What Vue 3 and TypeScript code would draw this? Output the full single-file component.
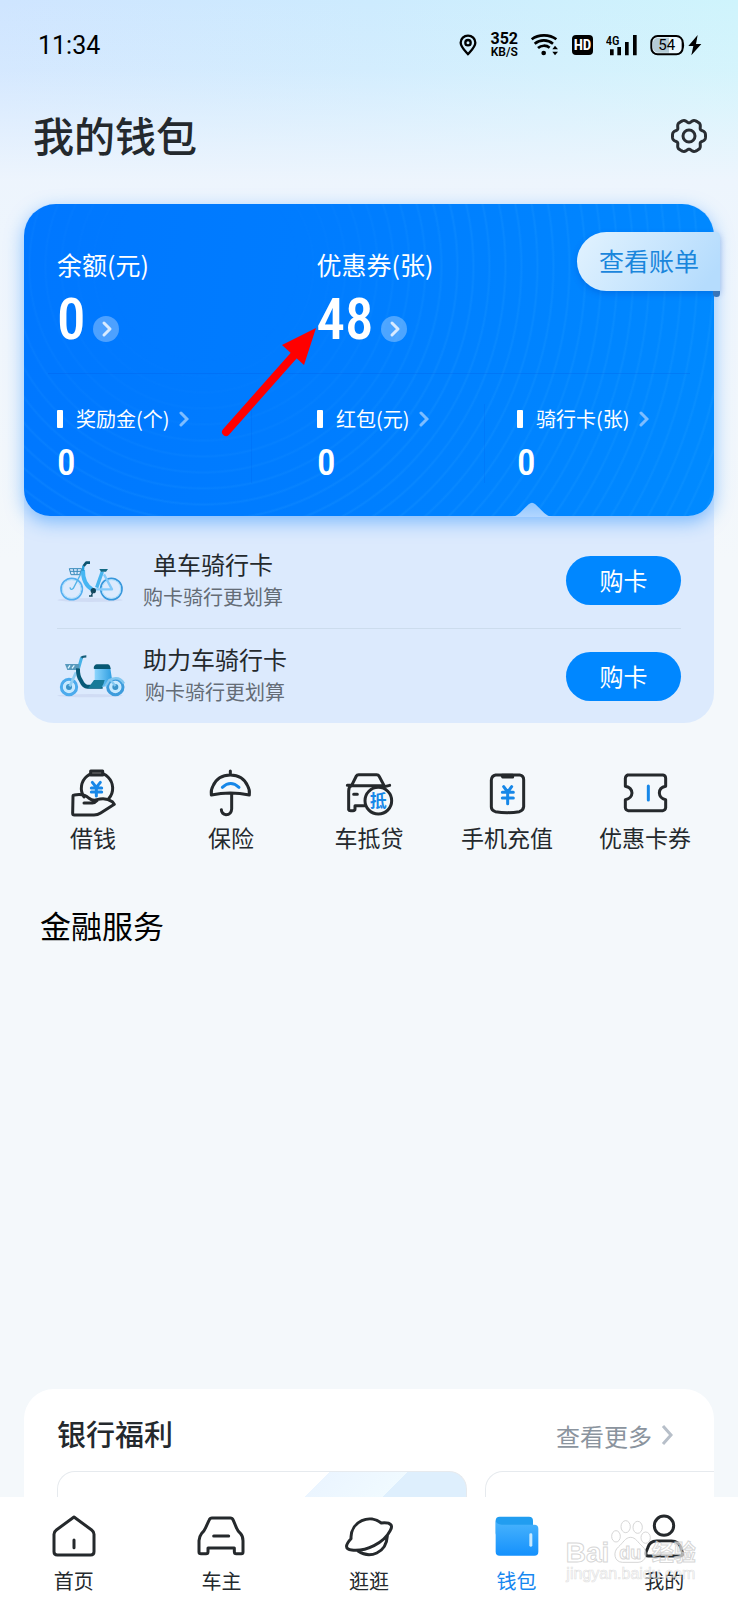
<script setup lang="ts">
interface Asset {
  label: string
  value: string
}
interface RideCard {
  id: 'bike' | 'scooter'
  title: string
  note: string
}
interface Entry {
  id: string
  label: string
}

const mainAssets: Asset[] = [
  { label: '余额(元)', value: '0' },
  { label: '优惠券(张)', value: '48' },
]
const subAssets: Asset[] = [
  { label: '奖励金(个)', value: '0' },
  { label: '红包(元)', value: '0' },
  { label: '骑行卡(张)', value: '0' },
]
const rideCards: RideCard[] = [
  { id: 'bike', title: '单车骑行卡', note: '购卡骑行更划算' },
  { id: 'scooter', title: '助力车骑行卡', note: '购卡骑行更划算' },
]
const services: Entry[] = [
  { id: 'loan', label: '借钱' },
  { id: 'insurance', label: '保险' },
  { id: 'car', label: '车抵贷' },
  { id: 'phone', label: '手机充值' },
  { id: 'coupon', label: '优惠卡券' },
]
const tabs: Entry[] = [
  { id: 'home', label: '首页' },
  { id: 'owner', label: '车主' },
  { id: 'explore', label: '逛逛' },
  { id: 'wallet', label: '钱包' },
  { id: 'me', label: '我的' },
]
const activeTab = 'wallet'

// Six-lobed outline of the settings gear
const gearPoints = Array.from({ length: 120 }, (_, i) => {
  const a = (i / 120) * Math.PI * 2
  const wave = Math.cos(6 * a)
  const r = 46 + 5 * wave - 1.5 * Math.cos(12 * a)
  return `${(60 + r * Math.cos(a)).toFixed(1)},${(60 + r * Math.sin(a)).toFixed(1)}`
}).join(' ')
</script>

<template>
  <div class="page">
    <header>
      <div class="status">
        <span class="time">11:34</span>
        <div class="indicators">
          <svg width="18" height="22" viewBox="276 102 54 66" fill="none" stroke="#000" stroke-width="7">
            <path d="M303 163C290 148 281 139 281 128a22 21 0 0 1 44 0c0 11-9 20-22 35z" stroke-linejoin="round" />
            <circle cx="303" cy="128" r="8" />
          </svg>
          <span class="speed"><b>352</b><small>KB/S</small></span>
          <svg width="28" height="22" viewBox="501 102 84 66" fill="none" stroke="#000" stroke-width="8">
            <path d="M503 118C523 102 557 102 577 118M512 131C528 118 551 118 567 131M522 144C532 135 547 135 557 143" />
            <circle cx="539" cy="159" r="7" fill="#000" stroke="none" />
            <path d="M565 148l8-11 9 11zM565 155l8 11 9-11z" fill="#000" stroke="none" />
          </svg>
          <span class="hd">HD</span>
          <svg width="31" height="22" viewBox="713 102 93 66">
            <text x="712" y="136" font-size="38" font-family="Roboto Condensed, Roboto, sans-serif" font-weight="500">4G</text>
            <path d="M725 148h11v18h-11zM747 141h11v25h-11zM770 126h11v40h-11zM794 105h11v61h-11z" />
          </svg>
          <svg width="52" height="22" viewBox="842 102 156 66">
            <rect x="846" y="108" width="94" height="55" rx="19" fill="#eaf8ff" stroke="#000" stroke-width="6" />
            <path d="M866 113h33v45h-33c-22 0-22-45 0-45z" fill="#b4cbd5" />
            <path d="M941 125q7 10 0 21z" />
            <text x="867" y="151" font-size="45" font-family="Roboto, sans-serif">54</text>
            <path d="M985 105l-28 33h15l-6 28 30-34h-16z" />
          </svg>
        </div>
      </div>
      <div class="title-row">
        <h1>我的钱包</h1>
        <button class="gear" aria-label="设置">
          <svg width="40" height="40" viewBox="0 0 120 120" fill="none" stroke="#292e33" stroke-width="9">
            <polygon :points="gearPoints" stroke-linejoin="round" />
            <circle cx="60" cy="60" r="18" />
          </svg>
        </button>
      </div>
    </header>

    <main>
      <section class="wallet">
        <div class="card">
          <div class="main-assets">
            <div v-for="a in mainAssets" :key="a.label" class="asset">
              <span class="label">{{ a.label }}</span>
              <div class="amount">
                <span class="big">{{ a.value }}</span>
                <button class="go" :aria-label="a.label">
                  <svg width="26" height="26" viewBox="0 0 26 26" fill="none" stroke="#d9ebff" stroke-width="3">
                    <path d="M11 7l6 6-6 6" stroke-linecap="round" stroke-linejoin="round" />
                  </svg>
                </button>
              </div>
            </div>
          </div>
          <div class="sub-assets">
            <div v-for="a in subAssets" :key="a.label" class="sub">
              <a href="#" class="sub-label">
                <i class="bar"></i>{{ a.label }}
                <svg width="10" height="16" viewBox="0 0 10 16" fill="none" stroke="#7dbdff" stroke-width="3">
                  <path d="M2 2l6 6-6 6" stroke-linecap="round" />
                </svg>
              </a>
              <span class="small">{{ a.value }}</span>
            </div>
          </div>
          <button class="bill">查看账单</button>
          <i class="fold"></i>
          <svg class="notch" width="48" height="15" viewBox="0 0 144 45">
            <defs>
              <linearGradient id="notchFill" x1="0" y1="0" x2="0" y2="1">
                <stop offset="0" stop-color="#8fc6ff" />
                <stop offset="1" stop-color="#b2d6ff" />
              </linearGradient>
            </defs>
            <path d="M0 45C22 45 30 38 42 26L62 7Q72-3 82 7L102 26C114 38 122 45 144 45z" fill="url(#notchFill)" />
          </svg>
          <svg class="pointer" width="96" height="112" viewBox="0 0 96 112" fill="#f00">
            <path d="M5 104L75 25" stroke="#f00" stroke-width="8" stroke-linecap="round" />
            <path d="M95 0L61 17L83 37z" />
          </svg>
        </div>

        <ul class="rides">
          <li v-for="r in rideCards" :key="r.id">
            <svg v-if="r.id === 'bike'" width="68" height="46" viewBox="21 39 204 138" fill="none">
              <ellipse cx="120" cy="165" rx="98" ry="6" fill="#d0dcf4" />
              <g stroke-width="5">
                <circle cx="65" cy="132" r="32" stroke="#54aef0" />
                <circle cx="184" cy="132" r="32" stroke="#3797dc" />
              </g>
              <circle cx="65" cy="132" r="28" stroke="#a9defc" stroke-width="3" />
              <circle cx="184" cy="132" r="28" stroke="#a9defc" stroke-width="3" />
              <path d="M96 80L70 130q-8 8-10-3" stroke="#53b4e8" stroke-width="4" />
              <path d="M130 133H186L162 88" stroke="#83cafa" stroke-width="7" stroke-linejoin="round" />
              <path d="M99 75Q98 118 128 134" stroke="#45b6f3" stroke-width="12" />
              <path d="M157 80L140 128" stroke="#47b5ee" stroke-width="10" />
              <path d="M99 78L100 62" stroke="#27a0db" stroke-width="7" />
              <path d="M101 63L109 53H120" stroke="#0d536f" stroke-width="8" stroke-linejoin="round" />
              <path d="M148 72H174L168 80H153z" fill="#126984" />
              <path d="M58 71H95L89 89H63zM70 72L73 88M82 72L81 88M60 79H92" stroke="#378abb" stroke-width="3" />
              <circle cx="130" cy="137" r="8" fill="#12465b" />
              <path d="M129 139L124 153M117 153H128" stroke="#174d63" stroke-width="4" />
            </svg>
            <svg v-else width="68" height="46" viewBox="21 324 204 138" fill="none">
              <defs>
                <linearGradient id="bodyFill">
                  <stop offset="0" stop-color="#94daff" />
                  <stop offset="1" stop-color="#2f9ee1" />
                </linearGradient>
              </defs>
              <ellipse cx="120" cy="452" rx="98" ry="5" fill="#d0dcf4" />
              <g stroke-width="9">
                <circle cx="57" cy="426" r="23" stroke="#4babed" />
                <circle cx="196" cy="426" r="23" stroke="#3d9cdc" />
              </g>
              <circle cx="57" cy="426" r="17" fill="#c4e9ff" />
              <circle cx="196" cy="426" r="17" fill="#c4e9ff" />
              <circle cx="57" cy="426" r="9" fill="#3a93c9" />
              <circle cx="196" cy="426" r="9" fill="#3a93c9" />
              <path d="M78 382L59 424" stroke="#8ecdf3" stroke-width="8" />
              <path d="M86 369L95 337" stroke="#45b2e7" stroke-width="9" />
              <path d="M94 338Q98 334 109 334" stroke="#155d79" stroke-width="7" />
              <path d="M45 357H88V375H52z" fill="#5799bd" />
              <path d="M60 361L54 370M73 361L66 370" stroke="#dff5ff" stroke-width="4" />
              <path d="M84 370Q83 393 93 407Q101 425 112 425H158" stroke="#085a78" stroke-width="12" />
              <path d="M134 370H181L186 403Q177 406 163 425H130L140 405H134z" fill="url(#bodyFill)" />
              <path d="M131 370Q132 359 141 358H174Q181 360 182 372H133z" fill="#075873" />
              <path d="M132 405H164Q162 418 153 430H114z" fill="#187a98" />
              <path d="M180 403L196 423M166 424L178 405Q208 391 222 416" stroke="#82c7f0" stroke-width="7" />
            </svg>
            <div class="ride-text">
              <strong>{{ r.title }}</strong>
              <span>{{ r.note }}</span>
            </div>
            <button class="buy">购卡</button>
          </li>
        </ul>
      </section>

      <nav class="services">
        <a v-for="s in services" :key="s.id" href="#">
          <svg v-if="s.id === 'loan'" class="line" width="48" height="50" viewBox="88 55 144 150">
            <path d="M133 142A47 47 0 1 1 208 146" />
            <path d="M153 64H189V76H153z" fill="#777" />
            <path class="blue" d="M158 98L170 113L182 98M170 113V139M155 115H186M155 127H186" />
            <path d="M100 140Q100 136 104 136Q133 131 147 145Q160 155 172 150Q198 142 218 156L224 164L183 190Q174 196 163 196H104Q99 196 99 191zM133 160H158Q166 160 173 152" />
          </svg>
          <svg v-else-if="s.id === 'insurance'" class="line" width="48" height="50" viewBox="501 55 144 150">
            <path d="M571 64V73M514 136Q512 120 519 109Q533 76 571 76Q609 76 623 109Q630 120 628 136Q571 124 514 136zM575 134V178Q574 195 558 195Q545 194 544 180" />
            <path class="blue" d="M547 113Q572 90 597 113" />
          </svg>
          <svg v-else-if="s.id === 'car'" class="line" width="48" height="50" viewBox="915 55 144 150">
            <path d="M922 107H935L949 79Q951 75 956 75H1010Q1015 75 1017 79L1034 111L1049 107M935 108H1032M935 108Q926 111 926 124V180Q927 183 932 183H939Q945 183 945 178V168H974M941 134H952" />
            <circle cx="1015" cy="153" r="40" />
            <text x="989" y="171" class="badge-text">抵</text>
          </svg>
          <svg v-else-if="s.id === 'phone'" class="line" width="48" height="50" viewBox="342 55 144 150">
            <path d="M380 76H452Q464 78 464 90V171Q463 182 451 186Q415 192 379 186Q367 182 367 172V91Q368 78 380 76z" />
            <path d="M399 77H431V82H401z" />
            <path class="blue" d="M404 111L416 127L428 111M416 127V162M400 128H433M400 145H433" />
          </svg>
          <svg v-else class="line" width="48" height="50" viewBox="756 55 144 150">
            <path d="M776 76H882Q890 77 890 86V110Q871 114 871 130Q872 146 890 150V174Q889 182 881 183H778Q770 182 769 174V150Q788 146 789 130Q788 114 769 110V86Q770 78 776 76z" />
            <path class="blue" d="M838 109V151" />
          </svg>
          <span>{{ s.label }}</span>
        </a>
      </nav>

      <section class="finance">
        <h2>金融服务</h2>
      </section>

      <section class="bank">
        <div class="bank-head">
          <h2>银行福利</h2>
          <a href="#">
            查看更多
            <svg width="12" height="20" viewBox="0 0 12 20" fill="none" stroke="#b7bfc9" stroke-width="3">
              <path d="M2 1l8 9-8 9" />
            </svg>
          </a>
        </div>
        <div class="offers">
          <div class="offer tinted"></div>
          <div class="offer"></div>
        </div>
      </section>
    </main>

    <nav class="tabbar">
      <a v-for="t in tabs" :key="t.id" href="#" :class="{ active: t.id === activeTab }">
        <svg v-if="t.id === 'home'" class="line" width="48" height="46" viewBox="149 430 144 138">
          <path d="M221 442L274 481Q281 486 281 494V546Q281 556 271 556H171Q161 556 161 546V494Q161 486 168 481zM221 511V534" />
        </svg>
        <svg v-else-if="t.id === 'owner'" class="line" width="48" height="46" viewBox="592 430 144 138">
          <path d="M637 445H692Q698 445 701 452L711 476Q714 484 722 491Q730 500 730 513V547Q730 552 725 552H710Q704 552 704 546V535H625V546Q625 552 619 552H604Q598 552 598 547V513Q599 500 606 491Q614 484 617 476L628 452Q631 445 637 445zM642 499H687" />
        </svg>
        <svg v-else-if="t.id === 'explore'" class="line" width="48" height="46" viewBox="1035 430 144 138">
          <path d="M1053 502A56 56 0 0 1 1144 460C1177 457 1178 470 1171 482C1152 520 1098 546 1055 541C1036 540 1034 527 1053 507V502M1074 544C1110 569 1159 550 1162 499" />
        </svg>
        <svg v-else-if="t.id === 'wallet'" width="48" height="46" viewBox="371 430 144 138">
          <defs>
            <linearGradient id="walletFill" x1="0" y1="0" x2="0" y2="1">
              <stop offset="0" stop-color="#4ab4fc" />
              <stop offset="1" stop-color="#1591fd" />
            </linearGradient>
          </defs>
          <rect x="379" y="441" width="112" height="60" rx="12" fill="#219df0" />
          <path d="M379 452Q381 465 397 465H495Q507 465 507 477V546Q507 558 495 558H391Q379 558 379 546z" fill="url(#walletFill)" />
          <rect x="480" y="491" width="9" height="40" rx="4" fill="#c9eaff" />
        </svg>
        <svg v-else class="line" width="48" height="46" viewBox="814 430 144 138">
          <circle cx="886" cy="468" r="29" />
          <path d="M864 514H908Q930 514 937 535L941 548Q943 559 934 559H839Q830 559 832 548L837 535Q843 514 864 514z" />
        </svg>
        <span>{{ t.label }}</span>
      </a>
      <svg class="watermark" width="138" height="68" viewBox="585 440 414 204">
        <g fill="#fff" fill-opacity=".6" stroke="#ccc" stroke-opacity=".8" stroke-width="3">
          <ellipse cx="741" cy="498" rx="13" ry="17" />
          <ellipse cx="770" cy="469" rx="14" ry="18" />
          <ellipse cx="806" cy="471" rx="14" ry="18" />
          <ellipse cx="830" cy="502" rx="14" ry="17" />
          <path d="M785 501C800 501 807 517 820 528C839 544 832 576 807 576H760C735 575 731 544 748 530C762 518 769 501 785 501z" />
          <text x="590" y="574" class="wm-name">Bai</text>
          <text x="751" y="567" class="wm-du">du</text>
          <text x="848" y="568" class="wm-cn">经验</text>
          <text x="592" y="627" class="wm-url">jingyan.baidu.com</text>
        </g>
      </svg>
    </nav>
  </div>
</template>

<style>
body {
  margin: 0;
  background: #f4f8fb;
}
</style>

<style scoped>
.page {
  min-height: 100vh;
  display: flex;
  flex-direction: column;
  overflow: hidden;
  color: #24292d;
  font-family: "Noto Sans CJK SC", sans-serif;
  background:
    linear-gradient(180deg, rgba(236, 245, 253, 0) 0, rgba(236, 245, 253, 0.2) 70px, rgba(238, 245, 253, 0.97) 180px, #f4f8fb 560px),
    linear-gradient(90deg, #cfe5ff 0%, #cdebfe 50%, #cff4fc 100%);
}
button {
  border: 0;
  padding: 0;
  font: inherit;
  background: none;
}
a {
  color: inherit;
  text-decoration: none;
}
h1,
h2 {
  margin: 0;
}
svg {
  display: block;
  flex: none;
}
.status {
  height: 90px;
  padding: 0 36px 0 38px;
  display: flex;
  align-items: center;
  justify-content: space-between;
  color: #000;
  font-family: Roboto, sans-serif;
}
.time {
  font-size: 25px;
}
.indicators {
  display: flex;
  align-items: center;
  gap: 13px;
}
.speed {
  display: flex;
  flex-direction: column;
  align-items: center;
}
.speed b {
  font-size: 16px;
  line-height: 14px;
}
.speed small {
  font-size: 12px;
  line-height: 12px;
  font-weight: 600;
}
.hd {
  width: 21px;
  height: 20px;
  border-radius: 4px;
  background: #000;
  color: #fff;
  font-family: "Roboto Condensed", Roboto, sans-serif;
  font-size: 15px;
  line-height: 20px;
  font-weight: 700;
  text-align: center;
}
.title-row {
  height: 92px;
  padding: 0 29px 0 33px;
  display: flex;
  align-items: center;
  justify-content: space-between;
}
h1 {
  padding-bottom: 4px;
  font-size: 41px;
  line-height: 60px;
  font-weight: 500;
}
main {
  flex: 1;
  display: flex;
  flex-direction: column;
  padding: 22px 24px 0;
}
.wallet {
  border-radius: 30px;
  background: #dceafd;
}
.card {
  position: relative;
  isolation: isolate;
  border-radius: 32px 32px 26px 26px;
  color: #fff;
  background: linear-gradient(100deg, #0077ff 0%, #007dff 45%, #008aff 100%);
  box-shadow: 0 6px 18px rgba(30, 140, 255, 0.5);
}
.card::before {
  content: "";
  position: absolute;
  inset: 0;
  z-index: -1;
  border-radius: inherit;
  background: repeating-radial-gradient(circle at 26% 20%, rgba(255, 255, 255, 0) 0 12px, rgba(60, 180, 255, 0.14) 14px, rgba(255, 255, 255, 0) 16px);
  mask-image: radial-gradient(circle at 26% 20%, transparent 90px, #000 260px);
}
.main-assets {
  display: grid;
  grid-template-columns: 260fr 398fr;
  padding: 43px 0 23px 33px;
}
.asset {
  display: flex;
  flex-direction: column;
  gap: 9px;
}
.label {
  font-size: 25px;
  line-height: 34px;
}
.amount {
  display: flex;
  align-items: center;
  gap: 7px;
  height: 60px;
}
.big,
.small {
  font-family: "Roboto Condensed", "Liberation Sans Narrow", "Noto Sans CJK SC", sans-serif;
  font-weight: 500;
}
.big {
  font-size: 57px;
  line-height: 60px;
}
.go {
  width: 26px;
  height: 26px;
  margin-top: 18px;
  border-radius: 50%;
  background: rgba(255, 255, 255, 0.3);
}
.sub-assets {
  display: grid;
  grid-template-columns: 227fr 233fr 230fr;
  padding: 31px 0 33px;
  background: linear-gradient(rgba(0, 80, 220, 0.22), rgba(0, 80, 220, 0.22)) center top / calc(100% - 48px) 1px no-repeat;
}
.sub {
  display: flex;
  flex-direction: column;
  gap: 9px;
  padding-left: 33px;
}
.sub + .sub {
  border-left: 1px solid rgba(0, 80, 220, 0.15);
}
.sub:nth-child(2) {
  padding-left: 65px;
}
.sub:nth-child(3) {
  padding-left: 32px;
}
.sub-label {
  display: flex;
  align-items: center;
  font-size: 20px;
  line-height: 30px;
}
.sub-label svg {
  margin-left: 9px;
}
.bar {
  width: 6px;
  height: 18px;
  margin-right: 13px;
  border-radius: 1px;
  background: #fff;
}
.small {
  font-size: 37px;
  line-height: 40px;
}
.bill {
  position: absolute;
  top: 28px;
  right: -6px;
  height: 59px;
  padding: 0 21px 4px 22px;
  border-radius: 30px 4px 0 30px;
  color: #1a86dc;
  font-size: 25px;
  background: linear-gradient(125deg, #ddf0fe 10%, #b5dcfd 90%);
  box-shadow: 0 3px 6px rgba(0, 70, 190, 0.3);
}
.fold {
  position: absolute;
  top: 87px;
  right: -6px;
  width: 7px;
  height: 6px;
  border-radius: 0 0 4px 4px;
  background: #3975b8;
}
.notch {
  position: absolute;
  right: 158px;
  bottom: -1px;
}
.pointer {
  position: absolute;
  left: 197px;
  top: 124px;
}
.rides {
  margin: 0;
  padding: 17px 33px 0;
  list-style: none;
}
.rides li {
  height: 95px;
  display: flex;
  align-items: center;
  box-sizing: border-box;
}
.rides li + li {
  border-top: 1px solid #ccdced;
}
.ride-text {
  display: flex;
  flex-direction: column;
  align-items: center;
  margin-left: 18px;
}
.ride-text strong {
  font-size: 24px;
  line-height: 32px;
  font-weight: 400;
}
.ride-text span {
  font-size: 20px;
  line-height: 34px;
  color: #646c76;
}
.buy {
  width: 115px;
  height: 49px;
  margin-left: auto;
  padding-bottom: 2px;
  border-radius: 25px;
  background: #0087ff;
  color: #fff;
  font-size: 24px;
}
.line {
  fill: none;
  stroke: #25292c;
  stroke-width: 9px;
  stroke-linecap: round;
  stroke-linejoin: round;
  overflow: visible;
}
.blue {
  stroke: #1687e8;
}
.badge-text {
  fill: #1687e8;
  stroke: none;
  font-size: 51px;
  font-weight: 700;
}
.services {
  display: grid;
  grid-template-columns: repeat(5, 1fr);
  margin-top: 45px;
}
.services a {
  display: flex;
  flex-direction: column;
  align-items: center;
  gap: 4px;
  font-size: 23px;
  line-height: 30px;
  white-space: nowrap;
}
.finance {
  flex: 1;
  min-height: 485px;
  box-sizing: border-box;
  padding: 51px 16px 0;
}
.finance h2 {
  color: #000;
  font-size: 31px;
  line-height: 44px;
  font-weight: 400;
}
.bank {
  border-radius: 30px 30px 0 0;
  overflow: hidden;
  background: #fff;
}
.bank-head {
  display: flex;
  align-items: center;
  justify-content: space-between;
  height: 82px;
  padding: 6px 41px 0 33px;
  box-sizing: border-box;
}
.bank-head h2 {
  font-size: 29px;
  font-weight: 500;
}
.bank-head a {
  display: flex;
  align-items: center;
  gap: 9px;
  padding-top: 4px;
  color: #8b949e;
  font-size: 24px;
}
.offers {
  display: flex;
  gap: 18px;
  margin-left: 33px;
}
.offer {
  flex: 0 0 408px;
  height: 25px;
  border: 1px solid #e6eaee;
  border-bottom: 0;
  border-radius: 18px 18px 0 0;
}
.tinted {
  background: linear-gradient(135deg, #fff 0 192px, #ebf5ff 192px, #f0faff 247px, #deeffd 247px);
}
.tabbar {
  position: relative;
  display: grid;
  grid-template-columns: repeat(5, 1fr);
  height: 103px;
  background: #fff;
}
.tabbar a {
  display: flex;
  flex-direction: column;
  align-items: center;
  gap: 7px;
  padding-top: 16px;
  font-size: 20px;
  line-height: 30px;
}
.active {
  color: #1687f0;
}
.watermark {
  position: absolute;
  right: 36px;
  top: 20px;
  pointer-events: none;
}
.wm-name,
.wm-du,
.wm-url {
  font-family: "Liberation Sans", sans-serif;
}
.wm-name {
  font-size: 84px;
  font-weight: 700;
}
.wm-du {
  font-size: 54px;
  font-weight: 700;
}
.wm-cn {
  font-size: 66px;
  font-weight: 700;
}
.wm-url {
  font-size: 48px;
  stroke-width: 2px;
  stroke-opacity: 0.6;
}
</style>
